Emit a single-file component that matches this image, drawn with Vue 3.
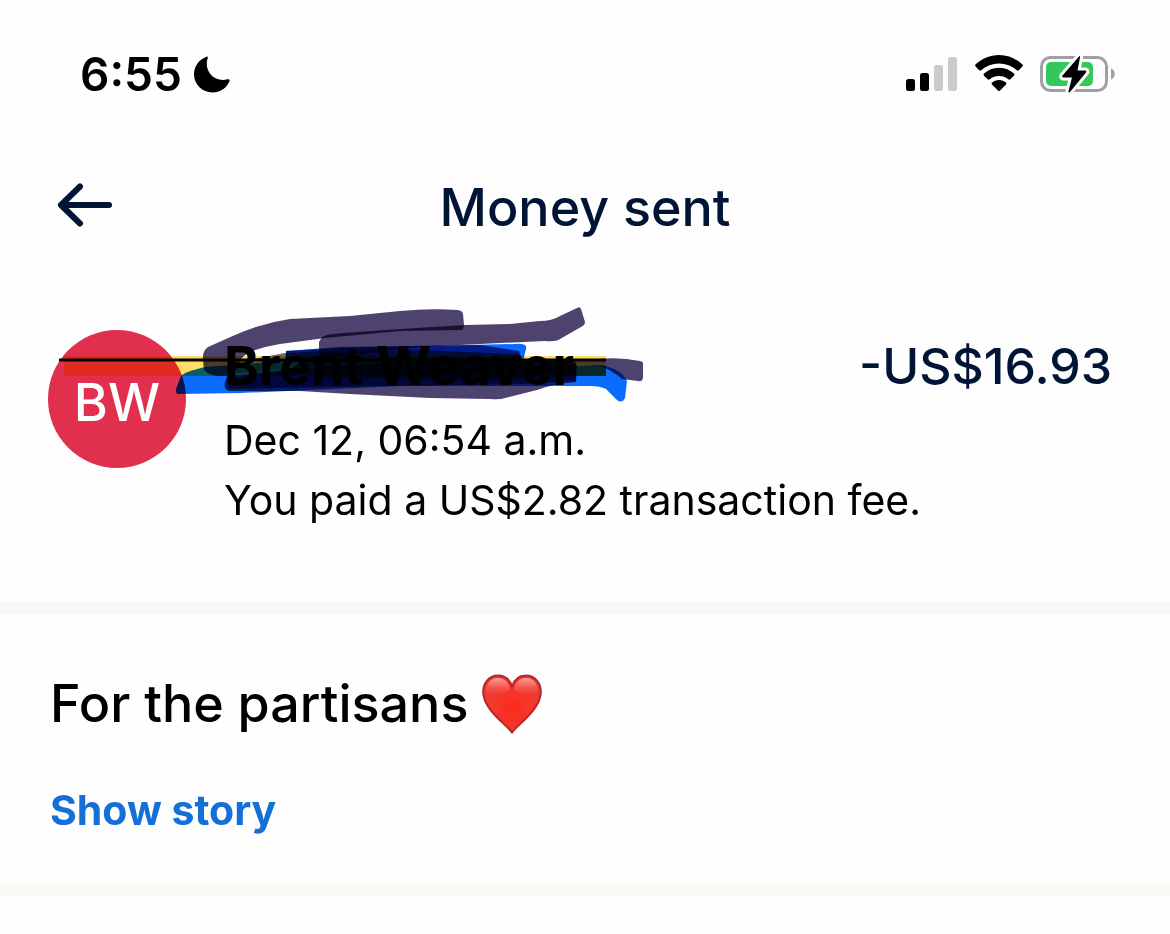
<template>
  <div class="screen">
    <div class="status-bar">
      <div class="clock">
        <span>{{ time }}</span>
        <svg class="moon" viewBox="0 0 36 37" width="36" height="37" aria-hidden="true">
          <path d="M11.500 1.200 Q14 -0.300 13.800 2 C9.500 13.500 19 27 33.500 23.300 Q36.300 22.800 35.400 25.300 C32.500 32.500 26 36.500 18.500 36.500 C8.500 36.500 0 28.700 0 18.300 C0 10.500 4.600 4 11.500 1.200 Z" />
        </svg>
      </div>
      <div class="indicators">
        <svg class="signal" viewBox="0 0 52 36" width="52" height="36" aria-hidden="true">
          <rect
            v-for="bar in bars"
            :key="bar.x"
            :x="bar.x"
            :y="35 - bar.height"
            width="9"
            :height="bar.height"
            rx="2.500"
            :class="{ off: !bar.on }"
          />
        </svg>
        <svg class="wifi" viewBox="0 1 48 36" width="48" height="36" overflow="visible" aria-hidden="true">
          <path d="M24 0 C33 0 41 3.500 47.300 9.300 Q48.300 10.400 47.400 11.500 L43.800 15.200 Q42.900 16 41.800 15.200 C36.800 10.900 30.800 8.600 24 8.600 C17.200 8.600 11.200 10.900 6.200 15.200 Q5.100 16 4.200 15.200 L0.600 11.500 Q-0.300 10.400 0.700 9.300 C7 3.500 15 0 24 0 Z" />
          <path d="M24 12.800 C30 12.800 35 15 39 18.600 Q40 19.700 39 20.800 L35.300 24.300 Q34.300 25.100 33.200 24.300 C30.500 22.200 27.500 21.100 24 21.100 C20.500 21.100 17.500 22.200 14.800 24.300 Q13.700 25.100 12.700 24.300 L9 20.800 Q8 19.700 9 18.600 C13 15 18 12.800 24 12.800 Z" />
          <path d="M24 25 C26.800 25 29 25.900 30.900 27.400 Q31.900 28.400 31 29.400 L25.100 35.400 Q24 36.400 22.900 35.400 L17 29.400 Q16.100 28.400 17.100 27.400 C19 25.900 21.200 25 24 25 Z" />
        </svg>
        <svg class="battery" viewBox="0 0 76 40" width="76" height="40" aria-hidden="true">
          <rect class="shell" x="1.500" y="3.500" width="65" height="33" rx="9" />
          <rect class="level" x="6" y="8" width="47" height="24" rx="5" />
          <path class="shell-tip" d="M71 14.500 C76 16 76 24 71 25.500 Z" />
          <path class="bolt" d="M39 2.500 Q40.500 1 40 3.500 L37.500 16.500 L45.500 16.500 Q47 17 46 18.500 L30 38 Q28 39.500 28.500 37 L32 23.500 L23 23.500 Q21.500 23 22.500 21.500 Z" />
        </svg>
      </div>
    </div>

    <header class="top-bar">
      <button class="back" type="button" aria-label="Back">
        <svg viewBox="0 0 56 50" width="56" height="50" aria-hidden="true">
          <path d="M24 3.500 L5 22 L24 40.500 M5 22 H53" />
        </svg>
      </button>
      <h1>Money sent</h1>
    </header>

    <main>
      <section class="transaction">
        <div class="avatar">BW</div>
        <div class="details">
          <h2>{{ payment.name }}</h2>
          <p>{{ payment.date }}</p>
          <p>{{ payment.fee }}</p>
        </div>
        <div class="amount">{{ payment.amount }}</div>
        <!-- marker strokes over the name -->
        <svg class="marker" viewBox="40 300 620 110" width="620" height="110" aria-hidden="true">
          <path class="yellow" d="M64 356 H606 V376 H64 Z" />
          <path class="blue" d="M176 389 L181 376 Q184 372 205 367 L285 361 L286 351 L340 348 L515 344 Q528 343 526 349 L522 365 L600 365 Q621 368 627 381 L625 398 Q622 404 617 400 L606 389 Q600 386 590 386 L400 386 L240 393 L178 394 Q175 393 176 389 Z" />
          <path class="navy" d="M286 351 L340 347 L480 345 L519 351 L522 360 L576 363 V381 L520 384 L330 387 L232 389 Q226 389 227 378 L290 370 L300 362 L286 361 Z" />
          <path class="purple" d="M458 310 Q430 308 400 311 L350 316 L290 319 Q262 323 235 335 L208 347 Q202 351 203 360 L204 370 Q210 377 225 376 L235 373 L242 358 Q250 349 280 344 L325 338 L400 331 L461 330 Q464 329 464 325 L463 314 Q463 311 458 310 Z" />
          <path class="shade" d="M236 362 L285 353 L320 351 V366 L236 374 Z" />
          <path class="purple" d="M322 337 Q326 334 345 333 L400 329 L465 325 L510 324 L540 321 Q552 321 560 316 L577 308 Q580 306 581 309 L585 322 Q585 325 581 327 L560 339 Q556 342 545 341 L500 343 L420 347 L345 356 L324 360 Q319 360 319 352 L319 342 Z" />
          <path class="purple" d="M227 376 L300 368 L400 362 L500 360 L600 359 Q620 357 640 361 Q644 362 643 365 L643 377 Q643 382 638 381 L622 379 Q612 370 600 366 L577 365 L576 382 Q552 384 537 390 L505 398 Q500 400 490 399 L430 398 L350 394 L300 391 L229 391 Q223 389 225 382 Z" />
          <path class="shade" d="M320 352 L420 350 L519 354 L522 360 L576 362 V376 L500 380 L320 378 Z" />
          <path class="shade" d="M576 366 H606 V376 H576 Z" />
          <path class="line" d="M59 360 H606" />
        </svg>
      </section>

      <section class="note">
        <p class="message">
          <span>For the partisans</span>
          <svg viewBox="0 0 60 60" width="60" height="60" role="img" aria-label="red heart">
            <defs>
              <radialGradient id="heart-body" cx="0.500" cy="0.600" r="0.600">
                <stop offset="0" stop-color="#fb2a1c" />
                <stop offset="0.600" stop-color="#f5382f" />
                <stop offset="1" stop-color="#e53b38" />
              </radialGradient>
              <linearGradient id="heart-shine" x1="0" y1="0" x2="0" y2="1">
                <stop offset="0" stop-color="#ffa79e" />
                <stop offset="1" stop-color="#ff5a50" stop-opacity="0" />
              </linearGradient>
            </defs>
            <path class="heart" d="M30 58.500 C25 51 2 36 1.200 19 C0.700 8 8 1.500 16 1.500 C23 1.500 28 6 30 12.500 C32 6 37 1.500 44 1.500 C52 1.500 59.300 8 58.800 19 C58 36 35 51 30 58.500 Z" />
            <path class="shine" d="M4 18 C4 9 9 4 16 4 C23 4 27 9 28 16 C20 22 10 23 4 18 Z M56 18 C56 9 51 4 44 4 C37 4 33 9 32 16 C40 22 50 23 56 18 Z" />
          </svg>
        </p>
        <a href="#story">Show story</a>
      </section>
    </main>
  </div>
</template>

<script setup>
import { ref } from 'vue'

const time = ref('6:55')

const bars = [
  { x: 0, height: 12, on: true },
  { x: 14, height: 18, on: true },
  { x: 28, height: 26, on: false },
  { x: 42, height: 34, on: false },
]

const payment = ref({
  name: 'Brent Weaver',
  date: 'Dec 12, 06:54 a.m.',
  fee: 'You paid a US$2.82 transaction fee.',
  amount: '-US$16.93',
})
</script>

<style>
body {
  background: #fefefe;
}
</style>

<style scoped>
.screen {
  font-family: Inter, "Liberation Sans", sans-serif;
  color: #000;
}

h1,
h2,
p {
  margin: 0;
}

svg {
  display: block;
}

.status-bar {
  display: flex;
  justify-content: space-between;
  align-items: center;
  padding: 44px 54px 0 80px;
  height: 60px;
}

.clock {
  display: flex;
  align-items: center;
  gap: 12px;
  font-size: 46px;
  font-weight: 600;
}

.indicators {
  display: flex;
  align-items: center;
  gap: 17px;
}

.signal .off {
  fill: #cbcbcb;
}

.shell {
  fill: none;
  stroke: #a0a0a4;
  stroke-width: 3;
}

.level {
  fill: #34c759;
}

.shell-tip {
  fill: #a0a0a4;
}

.bolt {
  stroke: #fefefe;
  stroke-width: 6;
  paint-order: stroke;
}

.top-bar {
  display: grid;
  grid-template-columns: 56px 1fr 56px;
  align-items: center;
  padding: 68px 56px 0;
  height: 72px;
  color: #001435;
}

.back {
  padding: 0;
  border: 0;
  background: none;
  color: inherit;
  cursor: pointer;
}

.back path {
  fill: none;
  stroke: currentColor;
  stroke-width: 6;
  stroke-linecap: round;
  stroke-linejoin: round;
}

h1 {
  font-size: 52px;
  font-weight: 500;
  line-height: 72px;
  text-align: center;
}

.transaction {
  position: relative;
  display: flex;
  align-items: flex-start;
  padding: 86px 58px 72px 48px;
  border-bottom: 12px solid #faf7f7;
}

.avatar {
  flex: none;
  width: 138px;
  height: 138px;
  margin-right: 38px;
  line-height: 146px;
  border-radius: 50%;
  background: #e0304e;
  color: #fff;
  font-size: 52px;
  font-weight: 500;
  text-align: center;
}

.details {
  flex: 1;
  min-width: 0;
}

.details h2 {
  margin-bottom: 8px;
  font-size: 53px;
  font-weight: 700;
  line-height: 72px;
}

.details p {
  font-size: 41px;
  line-height: 60px;
  white-space: nowrap;
}

.amount {
  color: #001435;
  font-size: 50px;
  font-weight: 500;
  line-height: 72px;
  white-space: nowrap;
}

.marker {
  position: absolute;
  top: 56px;
  left: 40px;
  mix-blend-mode: multiply;
}

.marker path {
  mix-blend-mode: multiply;
}

.yellow {
  fill: #ffdf66;
}

.blue {
  fill: #0a6cff;
}

.navy {
  fill: #404088;
}

.shade {
  fill: #6c6c70;
}

.purple {
  fill: #4e426e;
}

.line {
  stroke: #000;
  stroke-width: 3;
}

.note {
  padding: 54px 50px 43px;
  border-bottom: 12px solid #faf9f6;
}

.message {
  display: flex;
  align-items: center;
  gap: 14px;
  font-size: 52px;
  font-weight: 500;
  line-height: 72px;
}

.note a {
  display: inline-block;
  margin-top: 40px;
  color: #156fd6;
  font-size: 41px;
  font-weight: 700;
  line-height: 60px;
  text-decoration: none;
}

.heart {
  fill: url(#heart-body);
  stroke: #b8262a;
  stroke-width: 2;
}

.shine {
  fill: url(#heart-shine);
}
</style>
